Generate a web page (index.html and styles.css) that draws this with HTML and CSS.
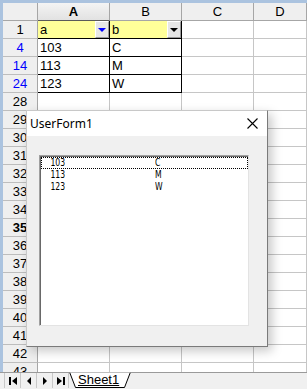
FILE: index.html
```html
<!DOCTYPE html>
<html>
<head>
    <title>UserForm1</title>
    <link rel="stylesheet" href="styles.css">
</head>
<body>
    <div class="app">
        <div class="sheet">
            <div class="hd corner"></div><div class="hd active">A</div><div class="hd">B</div><div class="hd">C</div><div class="hd">D</div>

            <div class="rh">1</div>
            <div class="c t head"><span>a</span><span class="drop"><i class="tri blue"></i></span></div>
            <div class="c t head"><span>b</span><span class="drop"><i class="tri"></i></span></div>
            <div class="c"></div><div class="c"></div>

            <div class="rh flt">4</div><div class="c t">103</div><div class="c t">C</div><div class="c"></div><div class="c"></div>
            <div class="rh flt">14</div><div class="c t">113</div><div class="c t">M</div><div class="c"></div><div class="c"></div>
            <div class="rh flt">24</div><div class="c t">123</div><div class="c t">W</div><div class="c"></div><div class="c"></div>

            <div class="rh">28</div><div class="c"></div><div class="c"></div><div class="c"></div><div class="c"></div>
            <div class="rh">29</div><div class="c"></div><div class="c"></div><div class="c"></div><div class="c"></div>
            <div class="rh">30</div><div class="c"></div><div class="c"></div><div class="c"></div><div class="c"></div>
            <div class="rh">31</div><div class="c"></div><div class="c"></div><div class="c"></div><div class="c"></div>
            <div class="rh">32</div><div class="c"></div><div class="c"></div><div class="c"></div><div class="c"></div>
            <div class="rh">33</div><div class="c"></div><div class="c"></div><div class="c"></div><div class="c"></div>
            <div class="rh">34</div><div class="c"></div><div class="c"></div><div class="c"></div><div class="c"></div>
            <div class="rh cur">35</div><div class="c"></div><div class="c"></div><div class="c"></div><div class="c"></div>
            <div class="rh">36</div><div class="c"></div><div class="c"></div><div class="c"></div><div class="c"></div>
            <div class="rh">37</div><div class="c"></div><div class="c"></div><div class="c"></div><div class="c"></div>
            <div class="rh">38</div><div class="c"></div><div class="c"></div><div class="c"></div><div class="c"></div>
            <div class="rh">39</div><div class="c"></div><div class="c"></div><div class="c"></div><div class="c"></div>
            <div class="rh">40</div><div class="c"></div><div class="c"></div><div class="c"></div><div class="c"></div>
            <div class="rh">41</div><div class="c"></div><div class="c"></div><div class="c"></div><div class="c"></div>
            <div class="rh">42</div><div class="c"></div><div class="c"></div><div class="c"></div><div class="c"></div>
            <div class="rh">43</div><div class="c"></div><div class="c"></div><div class="c"></div><div class="c"></div>
        </div>

        <div class="tabbar">
            <div class="nav">
                <span class="nb"><svg width="8" height="8" viewBox="0 0 8 8"><rect x="0" y="0" width="2" height="8"/><polygon points="8,0 8,8 3,4"/></svg></span>
                <span class="nb"><svg width="6" height="8" viewBox="0 0 6 8"><polygon points="5,0 5,8 1,4"/></svg></span>
                <span class="nb"><svg width="6" height="8" viewBox="0 0 6 8"><polygon points="1,0 1,8 5,4"/></svg></span>
                <span class="nb"><svg width="8" height="8" viewBox="0 0 8 8"><polygon points="0,0 0,8 5,4"/><rect x="6" y="0" width="2" height="8"/></svg></span>
            </div>
            <div class="tab">
                <svg class="tab-shape" width="62" height="16" viewBox="0 0 62 16"><polygon points="0.5,0 6.5,15.5 55.5,15.5 61.5,0" fill="#fff" stroke="#000" stroke-width="1"/><line x1="0" y1="0" x2="62" y2="0" stroke="#fff" stroke-width="1"/></svg>
                <span class="tab-label">Sheet1</span>
            </div>
        </div>

        <!-- the dialog floats over the sheet -->
        <div class="dialog">
            <div class="titlebar">
                <span class="title">UserForm1</span>
                <svg class="close" width="11" height="11" viewBox="0 0 11 11"><path d="M0.5 0.5 L10.5 10.5 M10.5 0.5 L0.5 10.5" stroke="#000" stroke-width="1.1"/></svg>
            </div>
            <div class="formbody">
                <div class="listbox">
                    <div class="li focus"><span class="c1">103</span><span class="c2">C</span></div>
                    <div class="li"><span class="c1">113</span><span class="c2">M</span></div>
                    <div class="li"><span class="c1">123</span><span class="c2">W</span></div>
                </div>
            </div>
        </div>
    </div>
</body>
</html>
```

FILE: styles.css
```css
body {
    margin: 0;
    font-family: "Liberation Sans", Arial, sans-serif;
    font-size: 12px;
    background: #fff;
}
.app {
    position: relative;
    width: 307px;
    height: 389px;
    overflow: hidden;
    display: flex;
    flex-direction: column;
}

/* spreadsheet grid */
.sheet {
    flex: 1;
    overflow: hidden;
    border-left: 3px solid #abc3df;
    border-top: 3px solid #abc3df;
    display: grid;
    grid-template-columns: 35px 72px 72px 72px 1fr;
    grid-auto-rows: 18px;
}
.hd {
    box-sizing: border-box;
    background: #efefef;
    border-right: 1px solid #a6a6a6;
    border-bottom: 1px solid #a6a6a6;
    text-align: center;
    line-height: 17px;
    font-size: 13px;
}
.hd.active {
    font-weight: bold;
    background: linear-gradient(#f4f4f4, #e2e2e2);
    border-bottom: 1px solid #5a5a5a;
}
.rh {
    box-sizing: border-box;
    background: #efefef;
    border-right: 1px solid #a6a6a6;
    border-bottom: 1px solid #bdbdbd;
    text-align: center;
    line-height: 18px;
    font-size: 13px;
}
.rh.flt { color: #0000ff; }
.rh.cur { font-weight: bold; }
.c {
    box-sizing: border-box;
    border-right: 1px solid #c6c6c6;
    border-bottom: 1px solid #c6c6c6;
    padding-left: 2px;
    line-height: 18px;
    font-size: 13px;
}
.c.t {
    border-right-color: #000;
    border-bottom-color: #000;
}
.c.head {
    background: #ffff99;
    display: flex;
    align-items: center;
    justify-content: space-between;
    padding-right: 0;
}
.drop {
    box-sizing: border-box;
    width: 14px;
    height: 17px;
    background: #e6e6e6;
    border-top: 1px solid #fff;
    border-left: 1px solid #fff;
    border-right: 1px solid #9a9a9a;
    border-bottom: 1px solid #9a9a9a;
    display: flex;
    align-items: center;
    justify-content: center;
}
.tri {
    width: 0;
    height: 0;
    border-left: 4px solid transparent;
    border-right: 4px solid transparent;
    border-top: 4px solid #000;
}
.tri.blue { border-top-color: #0000ff; }

/* sheet tabs */
.tabbar {
    height: 16px;
    flex: none;
    background: #f0f0f0;
    border-top: 1px solid #9a9a9a;
    display: flex;
    align-items: flex-start;
}
.nav {
    display: flex;
    margin-left: 4px;
    border-left: 1px solid #c8c8c8;
}
.nb {
    width: 16px;
    height: 15px;
    box-sizing: border-box;
    border-right: 1px solid #c8c8c8;
    display: flex;
    align-items: center;
    justify-content: center;
}
.nb svg { fill: #000; }
.tab {
    position: relative;
    width: 62px;
    height: 16px;
    margin-top: -1px;
    margin-left: 0;
}
.tab-shape {
    position: absolute;
    left: 0;
    top: 0;
}
.tab-label {
    position: relative;
    display: block;
    padding-left: 9px;
    line-height: 16px;
    font-size: 13px;
    text-decoration: underline;
}

/* userform dialog */
.dialog {
    position: absolute;
    left: 26px;
    top: 110px;
    width: 242px;
    height: 237px;
    box-sizing: border-box;
    border: 1px solid #7a7a7a;
    border-top-color: #c8c8c8;
    border-left-color: #c8c8c8;
    background: #f0f0f0;
    box-shadow: 4px 4px 10px rgba(0, 0, 0, 0.22);
    display: flex;
    flex-direction: column;
}
.titlebar {
    height: 25px;
    background: #fff;
    display: flex;
    align-items: center;
    justify-content: space-between;
    padding: 0 9px 0 3px;
}
.title {
    font-family: "Noto Sans", sans-serif;
    font-size: 12px;
    color: #000;
}
.formbody {
    flex: 1;
    padding: 19px 0 0 12px;
}
.listbox {
    box-sizing: border-box;
    width: 210px;
    height: 171px;
    background: #fff;
    border-top: 1px solid #a0a0a0;
    border-left: 1px solid #a0a0a0;
    border-right: 1px solid #e3e3e3;
    border-bottom: 1px solid #e3e3e3;
    box-shadow: inset 1px 1px 0 #696969;
    padding: 1px 0 0 1px;
}
.li {
    box-sizing: border-box;
    height: 12px;
    display: flex;
    align-items: center;
    font-family: "DejaVu Sans", sans-serif;
    font-size: 11px;
    line-height: 10px;
    color: #000;
    border: 1px solid transparent;
}
.li.focus { border: 1px dotted #000; }
.li span {
    display: inline-block;
    transform: scaleX(0.7);
    transform-origin: left center;
}
.li .c1 { width: 101px; padding-left: 12px; }
.li .c2 { width: 40px; }
```
